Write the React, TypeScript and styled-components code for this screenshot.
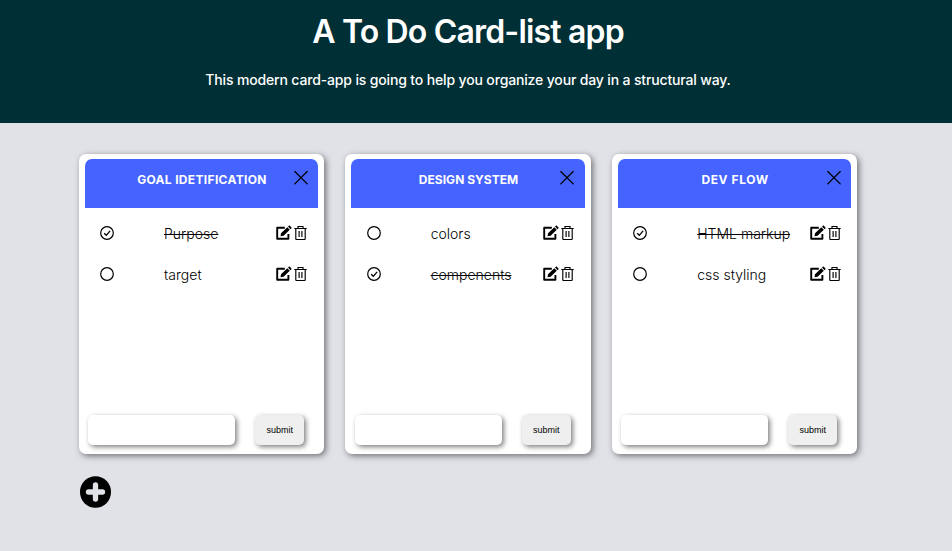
import React from "react";
import styled, { createGlobalStyle } from "styled-components";

const GlobalStyle = createGlobalStyle`
  * { box-sizing: border-box; }
  html, body { margin: 0; background: #e1e2e8; }
  body { font-family: Inter, sans-serif; color: #000; overflow: hidden; }
`;

const Page = styled.div`
  height: 551px;
`;

const Header = styled.header`
  height: 123px;
  padding: 11px 16px 0 0;
  background: #002f35;
  color: #fff;
  text-align: center;
`;

const Title = styled.h1`
  margin: 0;
  font: 600 32px/42px Inter, sans-serif;
  letter-spacing: -0.83px;
`;

const Intro = styled.p`
  margin: 17px 0 0;
  font-size: 14px;
  line-height: 20px;
  font-weight: 500;
  letter-spacing: -0.15px;
`;

const Board = styled.main`
  width: 778.4px;
  margin: 31px 0 0 78.7px;
`;

const Cards = styled.div`
  display: grid;
  grid-template-columns: repeat(3, 245.4px);
  column-gap: 21.2px;
`;

const Card = styled.section`
  display: flex;
  flex-direction: column;
  height: 300px;
  padding: 5px 6px 9px;
  border-radius: 7px;
  background: #fff;
  box-shadow: 2px 2px 6px rgba(0, 0, 0, 0.5);
`;

const CardHeader = styled.header`
  display: grid;
  grid-template-columns: 1fr 14px;
  height: 49px;
  padding: 12px 10.4px 0 25.6px;
  border-radius: 7px 7px 0 0;
  background: #4463ff;
`;

const CardTitle = styled.h2<{ $spacing: number }>`
  margin: 0;
  color: #fff;
  font: 700 12px/17px Inter, sans-serif;
  letter-spacing: ${(p) => p.$spacing}px;
  text-align: center;
  white-space: nowrap;
`;

const Close = styled.button`
  display: flex;
  width: 14px;
  height: 14px;
  padding: 0;
  border: 0;
  background: none;
  color: #000;
`;

const Tasks = styled.ul`
  flex: 1;
  margin: 0;
  padding: 4px 9.6px 0 15.4px;
  list-style: none;
`;

const Task = styled.li`
  display: grid;
  grid-template-columns: 64px 1fr 18px 14px;
  align-items: center;
  height: 41px;
`;

const TaskText = styled.span<{ $done: boolean }>`
  font-size: 14px;
  line-height: 20px;
  font-weight: 300;
  padding-top: 2px;
  white-space: nowrap;
  text-decoration: ${(p) => (p.$done ? "line-through" : "none")};
`;

const EntryForm = styled.form`
  display: flex;
  gap: 20px;
  padding-left: 3.5px;
`;

const Entry = styled.input`
  width: 147px;
  height: 30px;
  border: 0;
  border-radius: 5px;
  background: #fff;
  box-shadow: 2px 2px 5px rgba(0, 0, 0, 0.5);
`;

const Submit = styled.button`
  width: 49px;
  height: 30px;
  padding: 0;
  border: 0;
  border-radius: 5px;
  background: #efefef;
  color: #000;
  font: 400 9px "Liberation Sans", Arial, sans-serif;
  box-shadow: 2px 2px 5px rgba(0, 0, 0, 0.5);
`;

const AddCard = styled.button`
  display: flex;
  margin: 22px 0 0 1px;
  padding: 0;
  border: 0;
  background: none;
  color: #000;
`;

type TaskData = { text: string; done: boolean };
type CardData = { title: string; spacing: number; tasks: TaskData[] };

const cards: CardData[] = [
  {
    title: "GOAL IDETIFICATION",
    spacing: 0.33,
    tasks: [
      { text: "Purpose", done: true },
      { text: "target", done: false },
    ],
  },
  {
    title: "DESIGN SYSTEM",
    spacing: 0.03,
    tasks: [
      { text: "colors", done: false },
      { text: "compenents", done: true },
    ],
  },
  {
    title: "DEV FLOW",
    spacing: 0.6,
    tasks: [
      { text: "HTML markup", done: true },
      { text: "css styling", done: false },
    ],
  },
];

function CrossIcon() {
  return (
    <svg width="14" height="14" viewBox="0 0 14 14" stroke="currentColor" strokeWidth="1.3" strokeLinecap="round">
      <path d="M.8 .5 13.2 12.9M13.2 .5 .8 12.9" />
    </svg>
  );
}

function StatusIcon({ done }: { done: boolean }) {
  return (
    <svg width="14" height="14" viewBox="0 0 14 14" fill="none" stroke="currentColor" strokeWidth="1.2">
      <circle cx="7" cy="7" r="6.3" />
      {done && <path d="m4.2 7.2 2.1 2.1 3.8-4.5" strokeWidth="1.3" />}
    </svg>
  );
}

function EditIcon() {
  return (
    <svg width="16" height="16" viewBox="0 0 16 16" fill="none">
      <path d="M8.8 2.8H1.2v11h11.2V9" stroke="currentColor" strokeWidth="1.9" strokeLinejoin="round" />
      <path d="m5 8.3 6.3-6 2.5 2.5-6.2 6-3.1.5zM12 1.6l.7-.7c.4-.4.9-.4 1.3 0l1.3 1.3c.4.4.4.9 0 1.3l-.8.7z" fill="currentColor" />
    </svg>
  );
}

function TrashIcon() {
  return (
    <svg width="13" height="16" viewBox="0 0 13 16" fill="none" stroke="currentColor" strokeWidth="1.15">
      <path d="M.3 3.5h12.4M4 3.3V1.5h5v1.8M1.8 3.5V14c0 .3.3.5.6.5h8.2c.3 0 .6-.2.6-.5V3.5M5.1 6v6M7.9 6v6" />
    </svg>
  );
}

function PlusCircleIcon() {
  return (
    <svg width="31" height="32" viewBox="0 0 31 32">
      <ellipse cx="15.5" cy="16" rx="15.5" ry="15.8" fill="currentColor" />
      <path d="M15.5 9v14M8.5 16h14" stroke="#e1e2e8" strokeWidth="5.3" strokeLinecap="round" />
    </svg>
  );
}

function TodoCard({ card }: { card: CardData }) {
  return (
    <Card>
      <CardHeader>
        <CardTitle $spacing={card.spacing}>{card.title}</CardTitle>
        <Close aria-label="Remove card">
          <CrossIcon />
        </Close>
      </CardHeader>
      <Tasks>
        {card.tasks.map((task) => (
          <Task key={task.text}>
            <StatusIcon done={task.done} />
            <TaskText $done={task.done}>{task.text}</TaskText>
            <EditIcon />
            <TrashIcon />
          </Task>
        ))}
      </Tasks>
      <EntryForm>
        <Entry aria-label="New task" />
        <Submit type="button">submit</Submit>
      </EntryForm>
    </Card>
  );
}

export default function App() {
  return (
    <Page>
      <GlobalStyle />
      <Header>
        <Title>A To Do Card-list app</Title>
        <Intro>This modern card-app is going to help you organize your day in a structural way.</Intro>
      </Header>
      <Board>
        <Cards>
          {cards.map((card) => (
            <TodoCard key={card.title} card={card} />
          ))}
        </Cards>
        <AddCard aria-label="Add card">
          <PlusCircleIcon />
        </AddCard>
      </Board>
    </Page>
  );
}
